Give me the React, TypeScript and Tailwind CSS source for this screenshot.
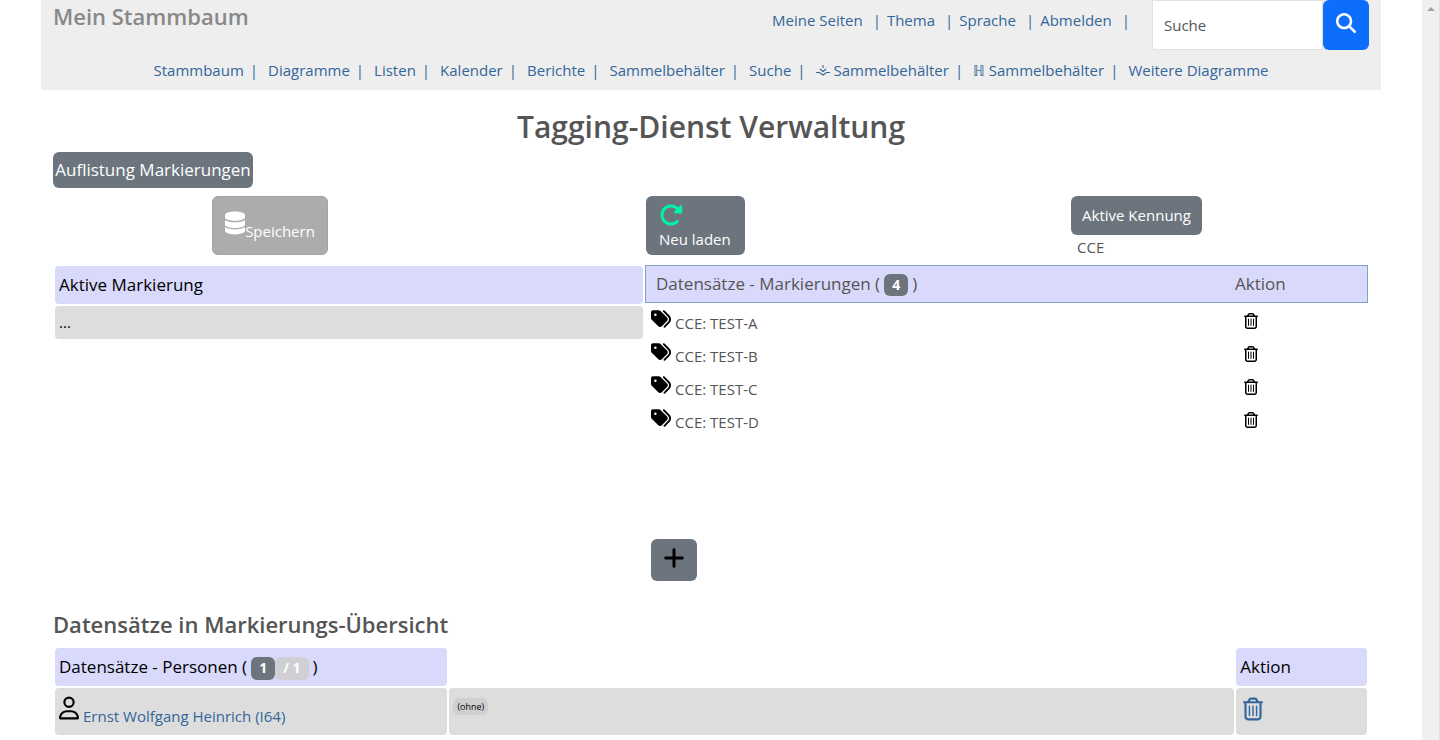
import React from 'react';
import { FaDatabase, FaMagnifyingGlass, FaPlus, FaRegTrashCan, FaRegUser, FaRotateRight, FaTags } from 'react-icons/fa6';

const userLinks = ['Meine Seiten', 'Thema', 'Sprache', 'Abmelden'];

const mainLinks: { label: string; mark?: 'leaf' | 'h' }[] = [
  { label: 'Stammbaum' },
  { label: 'Diagramme' },
  { label: 'Listen' },
  { label: 'Kalender' },
  { label: 'Berichte' },
  { label: 'Sammelbehälter' },
  { label: 'Suche' },
  { label: 'Sammelbehälter', mark: 'leaf' },
  { label: 'Sammelbehälter', mark: 'h' },
  { label: 'Weitere Diagramme' },
];

const tags = ['TEST-A', 'TEST-B', 'TEST-C', 'TEST-D'];

function LeafMark() {
  return (
    <svg viewBox="0 0 14 12" className="mr-1 inline-block h-3 w-3.5 align-baseline" fill="none" stroke="currentColor" strokeWidth="1.1" aria-hidden="true">
      <path d="M7 1v3M4 5l3 2.5L10 5M0 8.5h3.5L7 11l3.5-2.5H14" />
    </svg>
  );
}

function Header() {
  return (
    <header className="flex h-[90px] flex-col bg-[#eeeeee] px-3 text-[#336699]">
      <div className="flex h-[50px] items-start">
        <h1 className="mr-auto text-[22px] leading-8 font-semibold text-[#888888]">Mein Stammbaum</h1>
        <ul className="mr-[22px] flex h-[41px] items-center">
          {userLinks.map((label) => (
            <li key={label} className="flex">
              <a href="#" className="pr-2.5 pl-1.5">{label}</a>
              <span>|</span>
            </li>
          ))}
        </ul>
        <form className="flex h-[50px]" onSubmit={(e) => e.preventDefault()}>
          <input
            type="search"
            aria-label="Suche"
            placeholder="Suche"
            className="w-[171px] border border-[#dee2e6] bg-white px-[11px] text-[#555555] outline-none placeholder:text-[#555555]"
          />
          <button type="submit" aria-label="Suchen" className="flex w-[46px] justify-center rounded-md bg-[#0d6efd] pt-[13px] text-xl text-white">
            <FaMagnifyingGlass />
          </button>
        </form>
      </div>
      <nav className="flex h-[41px] items-center justify-center pr-1">
        {mainLinks.map(({ label, mark }, i) => (
          <span key={i} className="flex">
            <a href="#" className="pr-1.5 pl-2.5">
              {mark === 'leaf' && <LeafMark />}
              {mark === 'h' && 'ℍ '}
              {label}
            </a>
            {i < mainLinks.length - 1 && <span>|</span>}
          </span>
        ))}
      </nav>
    </header>
  );
}

function Toolbar() {
  return (
    <div className="mt-2 flex items-start justify-around text-white">
      <button type="button" disabled className="flex h-[59px] w-[116px] items-end justify-center rounded-md border border-[#9fa3a8] bg-[#acacac] pb-3">
        <FaDatabase className="mb-[7px] h-6 w-5" />
        Speichern
      </button>
      <button type="button" className="flex h-[59px] w-[99px] flex-col items-start rounded-md bg-[#6c757d] px-[13px] pt-[7px]">
        <FaRotateRight className="size-6 text-[#00f5a8]" />
        <span className="leading-6">Neu laden</span>
      </button>
      <div className="px-2">
        <button type="button" className="block h-[39px] w-[131px] rounded-md bg-[#6c757d]">Aktive Kennung</button>
        <p className="px-1.5 leading-6 text-[#555555]">CCE</p>
      </div>
    </div>
  );
}

function TagPanel() {
  return (
    <div className="mt-1.5 grid grid-cols-[592fr_723fr] items-start pr-px">
      <table className="-mt-px w-full border-separate border-spacing-0.5 text-left text-black">
        <thead>
          <tr>
            <th className="h-[38px] rounded-sm bg-[#d9d9fb] px-1 text-[17px] font-normal">Aktive Markierung</th>
          </tr>
        </thead>
        <tbody>
          <tr>
            <td className="h-[33px] rounded-sm bg-[#dddddd] px-1">...</td>
          </tr>
        </tbody>
      </table>
      <div className="text-[#555555]">
        <table className="w-full border-separate border-spacing-0 text-left">
          <thead>
            <tr>
              <th className="h-[38px] border border-r-0 border-[#7ba3cc] bg-[#d9d9fb] px-2.5 text-[17px] font-normal">
                Datensätze - Markierungen (
                <span className="mx-1 inline-flex h-[22px] items-center rounded-md bg-[#6c757d] px-2 text-sm font-bold text-white">4</span>)
              </th>
              <th className="w-[133px] border border-l-0 border-[#7ba3cc] bg-[#d9d9fb] text-[17px] font-normal">Aktion</th>
            </tr>
          </thead>
          <tbody>
            {tags.map((tag) => (
              <tr key={tag} className="align-top">
                <td className="h-[33px] px-1.5 pt-1.5">
                  <span className="flex items-start gap-1">
                    <FaTags className="size-5 text-black" />
                    <span className="pt-1 leading-5">CCE: {tag}</span>
                  </span>
                </td>
                <td className="px-2 pt-2.5">
                  <button type="button" aria-label={`${tag} löschen`} className="block text-base text-black">
                    <FaRegTrashCan />
                  </button>
                </td>
              </tr>
            ))}
          </tbody>
        </table>
        <button type="button" aria-label="Markierung hinzufügen" className="mt-[104px] ml-1.5 flex h-[42px] w-[46px] justify-center rounded-md bg-[#6c757d] pt-[7px] text-2xl text-black">
          <FaPlus />
        </button>
      </div>
    </div>
  );
}

function PersonTable() {
  return (
    <table className="mt-[7px] w-full table-fixed border-separate border-spacing-0.5 text-left text-black">
      <colgroup>
        <col className="w-[30%]" />
        <col />
        <col className="w-[10%]" />
      </colgroup>
      <thead>
        <tr>
          <th className="h-[38px] rounded-sm bg-[#d9d9fb] px-1 text-[17px] font-normal">
            Datensätze - Personen (
            <span className="ml-1 inline-flex h-[23px] items-center rounded-md bg-[#6c757d] px-2 text-sm font-bold text-white">1</span>
            <span className="mr-1 inline-flex h-[23px] items-center rounded-md bg-[#cfcfd4] px-2 text-sm font-bold text-white">/ 1</span>)
          </th>
          <td />
          <th className="rounded-sm bg-[#d9d9fb] px-1 text-[17px] font-normal">Aktion</th>
        </tr>
      </thead>
      <tbody>
        <tr className="align-top">
          <td className="h-[47px] rounded-sm bg-[#dddddd] px-1 pt-2">
            <a href="#" className="flex items-start gap-1 text-[#336699]">
              <FaRegUser className="h-6 w-5 text-black" />
              <span className="pt-2 leading-6">Ernst Wolfgang Heinrich (I64)</span>
            </a>
          </td>
          <td className="rounded-sm bg-[#dddddd] px-1 pt-2.5">
            <span className="block w-fit rounded-md bg-[#d0d0d0] px-1 text-[9px] leading-[17px]">(ohne)</span>
          </td>
          <td className="rounded-sm bg-[#dddddd] px-[7px] pt-[9px]">
            <button type="button" aria-label="Person löschen" className="block text-[#336699]">
              <FaRegTrashCan className="h-6 w-5" />
            </button>
          </td>
        </tr>
      </tbody>
    </table>
  );
}

function ScrollTrack() {
  return (
    <div className="flex w-[18px] shrink-0 justify-center border-r border-[#e2e2e2] bg-[#f0f0f0] pt-[7px]" aria-hidden="true">
      <svg viewBox="0 0 8 4" className="h-1 w-2" fill="#a3a3a3"><path d="M4 0l4 4H0z" /></svg>
    </div>
  );
}

export default function App() {
  return (
    <div className="flex min-h-screen bg-white font-['Open_Sans','Noto_Sans','DejaVu_Sans',sans-serif] text-[15px]">
      <div className="min-w-0 flex-1">
        <div className="mx-auto max-w-[1340px]">
          <Header />
          <main className="px-3">
            <h2 className="mt-[18px] text-center text-[30px] leading-[38px] font-semibold text-[#555555]">Tagging-Dienst Verwaltung</h2>
            <button type="button" className="mt-1.5 block h-9 w-[200px] rounded-md bg-[#6c757d] text-[17px] whitespace-nowrap text-white">
              Auflistung Markierungen
            </button>
            <Toolbar />
            <TagPanel />
            <h3 className="mt-7 text-[22px] leading-[30px] font-semibold text-[#555555]">Datensätze in Markierungs-Übersicht</h3>
            <PersonTable />
          </main>
        </div>
      </div>
      <ScrollTrack />
    </div>
  );
}
